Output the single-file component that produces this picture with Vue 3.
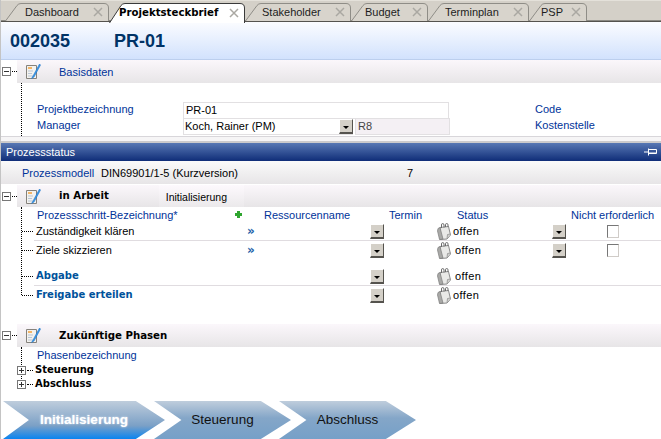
<script setup>
const tabs = [
  { label: 'Dashboard', width: 104, pad: 20 },
  { label: 'Projektsteckbrief', width: 136, pad: 10, active: true },
  { label: 'Stakeholder', width: 106, pad: 17 },
  { label: 'Budget', width: 77, pad: 14 },
  { label: 'Terminplan', width: 101, pad: 17 },
  { label: 'PSP', width: 58, pad: 12 }
]

// slanted left edge, rounded top right corner
const tabPath = (tab) => {
  const h = tab.active ? 20 : 18
  const w = tab.width
  return `M.5 ${h}L12 2.500Q13.500 .500 16 .500H${w - 5}Q${w - .5} .500 ${w - .5} 5V${h}`
}

const tasks = [
  { name: 'Zuständigkeit klären', arrow: true, extra: true, cls: 'first' },
  { name: 'Ziele skizzieren', arrow: true, extra: true, offset: true, cls: 'second' },
  { name: 'Abgabe', bold: true, offset: true, cls: 'third' },
  { name: 'Freigabe erteilen', bold: true, cls: 'last' }
]

const phases = [
  { label: 'Initialisierung', active: true },
  { label: 'Steuerung' },
  { label: 'Abschluss' }
]
</script>

<template>
  <div class="page">
    <div class="tabs">
      <div
        v-for="tab in tabs"
        :key="tab.label"
        class="tab"
        :class="{ active: tab.active }"
        :style="{ width: `${tab.width}px`, paddingLeft: `${tab.pad}px` }"
      >
        <svg class="tab-shape" :width="tab.width" :height="tab.active ? 20 : 18">
          <path :d="tabPath(tab)" />
        </svg>
        <span class="tab-label">{{ tab.label }}</span>
        <svg class="tab-x" width="10" height="10" viewBox="0 0 10 10">
          <path d="M1 1l8 8M9 1l-8 8" stroke="#aaa8a2" stroke-width="1.5" fill="none" />
        </svg>
      </div>
    </div>

    <div class="title">
      <span class="title-no">002035</span>
      <span>PR-01</span>
    </div>

    <div class="section">
      <span class="toggle minus"></span>
      <span class="stub"></span>
      <div class="bar">
        <svg class="note" width="16" height="17" viewBox="0 0 16 17">
          <path d="M1.500 2.500h10v13h-10z" fill="#f4f2ee" stroke="#85827c" />
          <path d="M3 5h4" stroke="#f39a2b" stroke-width="1.400" />
          <path d="M3 8h5M3 10.500h4M3 13h6" stroke="#b9c6d6" />
          <path d="M14.500 1L8 13l-1.500 2.500 2.500-1.500L15.500 2z" fill="#3f9be8" stroke="#1e76c9" stroke-width=".6" />
        </svg>
        <span class="bar-title">Basisdaten</span>
      </div>
    </div>

    <div class="basis">
      <span class="label">Projektbezeichnung</span>
      <div class="field">PR-01</div>
      <span class="label code">Code</span>
      <span class="label">Manager</span>
      <div class="field-pair">
        <div class="field select">
          <span>Koch, Rainer (PM)</span>
          <span class="drop"></span>
        </div>
        <div class="field readonly">R8</div>
      </div>
      <span class="label code">Kostenstelle</span>
    </div>

    <div class="panel-gap"></div>
    <div class="panel-head">
      <span>Prozessstatus</span>
      <svg width="13" height="8" viewBox="0 0 13 8">
        <path d="M0 4h4M4.500 .500v7M5 1.500h7.500v4H5" stroke="#fff" fill="none" />
        <path d="M5 5h7" stroke="#fff" />
      </svg>
    </div>

    <div class="model">
      <span class="label">Prozessmodell</span>
      <span>DIN69901/1-5 (Kurzversion)</span>
      <span>7</span>
    </div>

    <div class="section active-section">
      <span class="toggle minus"></span>
      <span class="stub"></span>
      <div class="bar">
        <svg class="note" width="16" height="17" viewBox="0 0 16 17">
          <path d="M1.500 2.500h10v13h-10z" fill="#f4f2ee" stroke="#85827c" />
          <path d="M3 5h4" stroke="#f39a2b" stroke-width="1.400" />
          <path d="M3 8h5M3 10.500h4M3 13h6" stroke="#b9c6d6" />
          <path d="M14.500 1L8 13l-1.500 2.500 2.500-1.500L15.500 2z" fill="#3f9be8" stroke="#1e76c9" stroke-width=".6" />
        </svg>
        <b class="bar-title strong">in Arbeit</b>
        <span class="phase-chip">Initialisierung</span>
      </div>
    </div>

    <div class="tasks">
      <div class="task-grid task-head">
        <span class="label">Prozessschritt-Bezeichnung*</span>
        <span class="plus"></span>
        <span class="label">Ressourcenname</span>
        <span class="label head-termin">Termin</span>
        <span class="label head-status">Status</span>
        <span></span>
        <span class="label">Nicht erforderlich</span>
      </div>
      <div
        v-for="task in tasks"
        :key="task.name"
        class="task-grid task"
        :class="task.cls"
      >
        <span class="task-name" :class="{ bold: task.bold }">{{ task.name }}</span>
        <span class="arrow">{{ task.arrow ? '»' : '' }}</span>
        <span></span>
        <span><span class="drop"></span></span>
        <span class="status">
          <svg width="14" height="17" viewBox="0 0 14 17">
            <path d="M3 4.500l8.500-1 2 8.500-3.500 4-7 .500z" fill="#e9e9e7" stroke="#8a8a8a" />
            <path d="M1 5.500l2-1 3 11.500-3.500.500L.500 8z" fill="#a9a9a7" stroke="#7c7c7c" stroke-width=".7" />
            <path d="M10 15.500l.5-4 3-.500" fill="#cfcfcd" stroke="#8a8a8a" stroke-width=".7" />
            <path d="M4.500 5V2q0-1.500 1.200-1.500T7 2v2.500M8.500 4V1.800q0-1.300 1.200-1.300T11 1.800V4" fill="none" stroke="#6c6c6c" />
          </svg>
          <span class="offen" :class="{ shifted: task.offset }">offen</span>
        </span>
        <span><span v-if="task.extra" class="drop"></span></span>
        <span class="check-cell"><span v-if="task.extra" class="check"></span></span>
      </div>
    </div>

    <div class="section">
      <span class="toggle minus"></span>
      <span class="stub"></span>
      <div class="bar">
        <svg class="note" width="16" height="17" viewBox="0 0 16 17">
          <path d="M1.500 2.500h10v13h-10z" fill="#f4f2ee" stroke="#85827c" />
          <path d="M3 5h4" stroke="#f39a2b" stroke-width="1.400" />
          <path d="M3 8h5M3 10.500h4M3 13h6" stroke="#b9c6d6" />
          <path d="M14.500 1L8 13l-1.500 2.500 2.500-1.500L15.500 2z" fill="#3f9be8" stroke="#1e76c9" stroke-width=".6" />
        </svg>
        <b class="bar-title strong">Zukünftige Phasen</b>
      </div>
    </div>

    <div class="future-list">
      <div class="label future-head">Phasenbezeichnung</div>
      <div class="future-item">
        <span class="toggle plus-box"></span><span class="stub short"></span><b>Steuerung</b>
      </div>
      <div class="future-item">
        <span class="toggle plus-box"></span><span class="stub short"></span><b>Abschluss</b>
      </div>
    </div>

    <div class="chevrons">
      <div
        v-for="phase in phases"
        :key="phase.label"
        class="chevron"
        :class="{ current: phase.active }"
      >
        {{ phase.label }}
      </div>
    </div>
  </div>
</template>

<style>
html,
body {
  margin: 0;
  overflow: hidden;
  background: #fff;
}
</style>

<style scoped>
.page {
  width: 661px;
  height: 439px;
  overflow: hidden;
  box-sizing: border-box;
  background: #fff;
  color: #000;
  font: 11px/14px 'Liberation Sans', Arial, sans-serif;
  border-left: 1px solid #c4c4c4;
}

.tabs {
  display: flex;
  height: 22px;
  box-sizing: border-box;
  margin-left: -1px;
  padding: 3px 0 0 5px;
  background: linear-gradient(#e4e1da 0 1px, #d4d0c8 1px);
  border-bottom: 1px solid #55534e;
  box-shadow: inset 0 -1px 0 #8b8982;
}

.tab {
  display: flex;
  align-items: center;
  position: relative;
  box-sizing: border-box;
  height: 18px;
  padding-right: 6px;
  color: #1c1c1c;
  font-size: 11px;
  white-space: nowrap;
}

.tab.active {
  height: 20px;
  color: #000;
  font: bold 10.200px/14px 'DejaVu Sans', sans-serif;
  z-index: 1;
}

.tab-shape {
  position: absolute;
  left: 0;
  top: 0;
  fill: #d8d4cc;
  stroke: #8f8d87;
}

.active .tab-shape {
  fill: #fff;
  stroke: #3a3a3a;
}

.tab-label {
  position: relative;
}

.tab-x {
  position: relative;
  flex: none;
  margin-left: auto;
}

.title {
  display: flex;
  align-items: center;
  height: 38px;
  box-sizing: border-box;
  padding: 0 0 0 9px;
  gap: 44px;
  color: #003366;
  font: bold 18px/22px 'Liberation Sans', Arial, sans-serif;
  background: linear-gradient(#fbfcff, #d2e2fd);
  border-bottom: 1px solid #bccfee;
}

.section {
  display: flex;
  align-items: center;
  height: 23px;
  padding-left: 1px;
}

.toggle {
  flex: none;
  display: block;
  position: relative;
  box-sizing: border-box;
  width: 9px;
  height: 9px;
  border: 1px solid #777;
  background: #fff;
}

.toggle::before {
  content: '';
  position: absolute;
  left: 1px;
  top: 3px;
  width: 5px;
  height: 1px;
  background: #333;
}

.plus-box::after {
  content: '';
  position: absolute;
  left: 3px;
  top: 1px;
  width: 1px;
  height: 5px;
  background: #333;
}

.stub {
  flex: none;
  width: 5px;
  height: 0;
  margin-left: 1px;
  border-top: 1px dotted #000;
}

.stub.short {
  width: 6px;
  margin-right: 2px;
}

.bar {
  display: flex;
  align-items: center;
  flex: 1;
  height: 100%;
  background: linear-gradient(#fbf7fb, #e7e5e7);
}

.note {
  margin-left: 8px;
  flex: none;
}

.bar-title {
  margin-left: 18px;
  color: #003399;
}

.bar-title.strong {
  color: #000;
  font: bold 10.200px/14px 'DejaVu Sans', sans-serif;
}

.phase-chip {
  width: 85px;
  margin-left: 50px;
  padding-left: 7px;
  height: 100%;
  box-sizing: border-box;
  font-size: 10.500px;
  line-height: 25px;
  background: linear-gradient(#fdf9fd, #ebe9eb);
}

.label {
  color: #003399;
}

.basis {
  display: grid;
  grid-template-columns: 146px 266px 1fr;
  grid-auto-rows: 16.500px;
  align-items: center;
  height: 53px;
  box-sizing: border-box;
  margin-left: 20px;
  padding: 19px 0 0 15px;
  border-left: 1px dotted #000;
}

.basis .label {
  margin-bottom: 3px;
}

.code {
  margin-left: 86px;
}

.field {
  height: 17px;
  box-sizing: border-box;
  padding-left: 2px;
  line-height: 15px;
  border: 1px solid #e2e0e2;
  background: #fff;
}

.field-pair {
  display: flex;
  gap: 2px;
  width: 267px;
}

.select {
  display: flex;
  align-items: center;
  justify-content: space-between;
  width: 170px;
  padding-left: 1px;
  border-right: 0;
}

.readonly {
  flex: 1;
  padding-left: 2px;
  color: #444;
  background: #f4f0f4;
}

.drop {
  display: block;
  position: relative;
  box-sizing: border-box;
  width: 14px;
  height: 15px;
  border-top: 1px solid #fff;
  border-left: 1px solid #fff;
  border-right: 1px solid #55534e;
  border-bottom: 2px solid #55534e;
  background: #d4d0c8;
}

.drop::after {
  content: '';
  position: absolute;
  left: 3px;
  top: 6px;
  border: 3px solid transparent;
  border-top: 3px solid #000;
  border-bottom: 0;
}

.panel-gap {
  height: 7px;
  box-sizing: border-box;
  border-top: 1px solid #d8d6da;
  border-bottom: 2px solid #cccbcc;
  background: #f6f5f6;
}

.panel-head {
  display: flex;
  align-items: center;
  justify-content: space-between;
  height: 18px;
  box-sizing: border-box;
  padding: 0 4px 0 5px;
  color: #fff;
  background: linear-gradient(#5878b4, #0f2d78);
}

.model {
  display: grid;
  grid-template-columns: 79px 306px 1fr;
  align-items: center;
  height: 23px;
  padding-left: 21px;
  background: linear-gradient(#fafafa, #e7e5e7);
}

.active-section {
  margin-top: 1px;
  height: 22px;
}

.task-grid {
  display: grid;
  grid-template-columns: 198px 30px 106px 67px 115px 19px 1fr;
  align-items: center;
}

.tasks {
  position: relative;
  height: 117px;
}

.tasks::before {
  content: '';
  position: absolute;
  left: 20px;
  top: 0;
  height: 88px;
  border-left: 1px dotted #000;
}

.task-head {
  height: 15px;
  padding-left: 36px;
  grid-template-columns: 197px 30px 106px 67px 115px 19px 1fr;
}

.plus {
  width: 7px;
  height: 7px;
  margin-left: 1px;
  background:
    linear-gradient(#2fa52f, #2fa52f) center / 7px 3px no-repeat,
    linear-gradient(#2fa52f, #2fa52f) center / 3px 7px no-repeat;
}

.head-termin {
  margin-left: 19px;
}

.head-status {
  margin-left: 20px;
}

.task {
  position: relative;
  height: 18px;
  margin-left: 33px;
  padding-left: 2px;
  border-bottom: 1px solid #e0dce0;
  box-sizing: content-box;
}

.task::before {
  content: '';
  position: absolute;
  left: -12px;
  top: 9px;
  width: 11px;
  border-top: 1px dotted #000;
}

.task.second {
  border-bottom: 0;
  margin-bottom: 8px;
}

.task.last {
  border-bottom: 0;
}

.task-name.bold {
  color: #00529b;
  font: bold 10px/14px 'DejaVu Sans', sans-serif;
}

.arrow {
  color: #1d5fa8;
  font: bold 12px/14px 'DejaVu Sans', sans-serif;
  padding-left: 13px;
}

.status {
  display: flex;
  align-items: center;
  gap: 2px;
}

.offen {
  letter-spacing: .4px;
}

.shifted {
  margin-left: 2px;
}

.check-cell {
  padding-left: 36px;
}

.check {
  display: block;
  box-sizing: border-box;
  width: 12px;
  height: 13px;
  border: 1px solid #d0ccc8;
  border-top-color: #777;
  border-left-color: #777;
  background: #fff;
}

.future-list {
  position: relative;
  height: 54px;
  padding-left: 16px;
}

.future-list::before {
  content: '';
  position: absolute;
  left: 20px;
  top: 0;
  height: 34px;
  border-left: 1px dotted #000;
}

.future-head {
  height: 15px;
  padding: 1px 0 0 20px;
}

.future-item {
  display: flex;
  align-items: center;
  height: 14px;
  position: relative;
}

.future-item b {
  font: bold 10px/14px 'DejaVu Sans', sans-serif;
}

.chevrons {
  display: flex;
  height: 38px;
  padding-left: 2px;
}

.chevron {
  display: flex;
  align-items: center;
  justify-content: center;
  width: 137px;
  margin-right: -12px;
  box-sizing: border-box;
  color: #111;
  font: 13.500px/18px 'Liberation Sans', Arial, sans-serif;
  background: linear-gradient(#bfcddc 0, #84a6c8 45%, #76a0c8 100%);
  clip-path: polygon(0 0, 78% 0, 100% 50%, 78% 100%, 0 100%, 20% 50%);
}

.chevron.current {
  width: 162px;
  margin-right: -11px;
  color: #fff;
  font-weight: bold;
  text-shadow: 0 0 2px #e8f0f8;
  background: linear-gradient(#bfcddc 0, #7ba0c6 65%, #0a84f0 100%);
  clip-path: polygon(0 0, 82% 0, 100% 50%, 82% 100%, 0 100%, 16% 50%);
}
</style>
